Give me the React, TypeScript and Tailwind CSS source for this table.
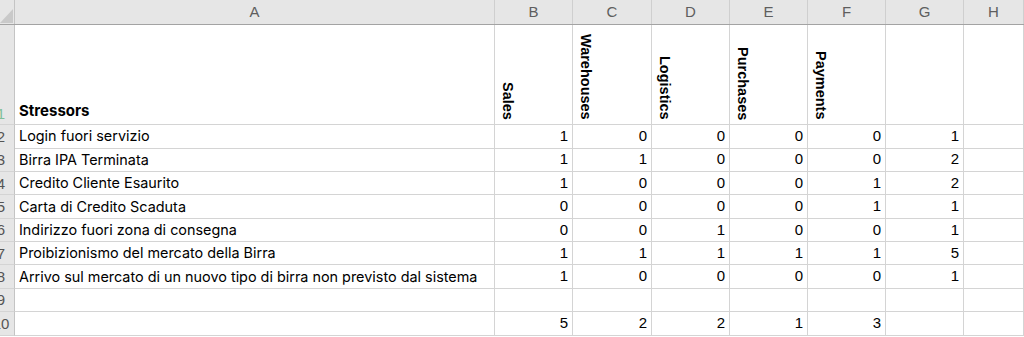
import React from "react";

const cols = ["A", "B", "C", "D", "E", "F", "G", "H"];
const grid = "grid grid-cols-[15px_480px_78px_79px_78px_78px_78px_78px_1fr]";

const rows: { label: string; vals: (number | null)[] }[] = [
  { label: "Login fuori servizio", vals: [1, 0, 0, 0, 0, 1] },
  { label: "Birra IPA Terminata", vals: [1, 1, 0, 0, 0, 2] },
  { label: "Credito Cliente Esaurito", vals: [1, 0, 0, 0, 1, 2] },
  { label: "Carta di Credito Scaduta", vals: [0, 0, 0, 0, 1, 1] },
  { label: "Indirizzo fuori zona di consegna", vals: [0, 0, 1, 0, 0, 1] },
  { label: "Proibizionismo del mercato della Birra", vals: [1, 1, 1, 1, 1, 5] },
  {
    label: "Arrivo sul mercato di un nuovo tipo di birra non previsto dal sistema",
    vals: [1, 0, 0, 0, 0, 1],
  },
  { label: "", vals: [null, null, null, null, null, null] },
  { label: "", vals: [5, 2, 2, 1, 3, null] },
];

const vertical = ["Sales", "Warehouses", "Logistics", "Purchases", "Payments"];

function RowHead({ n, green, tall }: { n: number; green?: boolean; tall?: boolean }) {
  return (
    <div
      className={`overflow-hidden bg-[#e6e6e6] border-r border-r-[#c4c4c4] border-b border-b-[#d4d4d4] flex ${
        tall ? "items-end pb-[3px]" : "items-center"
      }`}
    >
      <div
        className={`ml-[-18px] w-[38px] shrink-0 text-center text-[15px] leading-none font-['Liberation_Sans',sans-serif] ${
          green ? "text-[#7fbf9a]" : "text-[#555555]"
        }`}
      >
        {n}
      </div>
    </div>
  );
}

export default function App() {
  return (
    <div className="w-[1024px] h-[337px] overflow-hidden bg-white">
      {/* column headers */}
      <div className={`${grid} h-[25px] bg-[#e6e6e6] border-b border-b-[#a3a3a3]`}>
        <div className="border-r border-r-[#c4c4c4] relative overflow-hidden">
          <svg width="15" height="24" className="block">
            <polygon points="0,23 13,9 13,23" fill="#c9c9c9" />
          </svg>
        </div>
        {cols.map((c) => (
          <div
            key={c}
            className="border-r border-r-[#cfcfcf] flex items-center justify-center text-[15px] text-[#5e5e5e] font-['Liberation_Sans',sans-serif]"
          >
            {c}
          </div>
        ))}
      </div>

      {/* row 1 */}
      <div className={`${grid} h-[100px]`}>
        <RowHead n={1} green tall />
        <div className="border-r border-b border-[#d4d4d4] flex items-end pl-[4px] pb-[2px] text-[15px] font-bold text-black font-['Inter',sans-serif]">
          Stressors
        </div>
        {vertical.map((v) => (
          <div
            key={v}
            className="border-r border-b border-[#d4d4d4] flex items-end pl-[5px] pb-[4px]"
          >
            <span className="[writing-mode:vertical-rl] text-[14.5px] leading-[16px] font-bold text-black font-['Liberation_Sans',sans-serif]">
              {v}
            </span>
          </div>
        ))}
        <div className="border-r border-b border-[#d4d4d4]" />
        <div className="border-r border-b border-[#d4d4d4]" />
      </div>

      {rows.map((r, i) => (
        <div key={i} className={`${grid} h-[23.4px]`}>
          <RowHead n={i + 2} />
          <div className="border-r border-b border-[#d4d4d4] flex items-center pl-[4px] text-[14.4px] text-black font-['Inter',sans-serif] whitespace-nowrap">
            {r.label}
          </div>
          {r.vals.map((v, j) => (
            <div
              key={j}
              className="border-r border-b border-[#d4d4d4] flex items-center justify-end pr-[4px] text-[15px] text-black font-['Liberation_Sans',sans-serif]"
            >
              {v === null ? "" : v}
            </div>
          ))}
          <div className="border-r border-b border-[#d4d4d4]" />
        </div>
      ))}
    </div>
  );
}
